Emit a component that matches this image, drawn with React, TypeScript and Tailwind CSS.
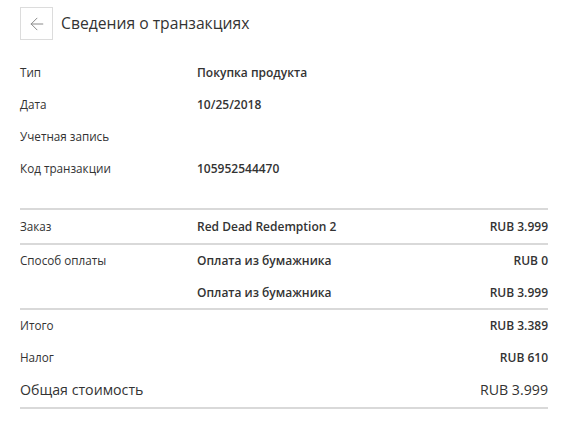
import { ArrowLeft } from "lucide-react";

const infoRows = [
  { label: "Тип", value: "Покупка продукта" },
  { label: "Дата", value: "10/25/2018" },
  { label: "Учетная запись", value: "" },
  { label: "Код транзакции", value: "105952544470" },
];

const Row = ({
  label,
  value,
  amount,
  h,
}: {
  label: string;
  value?: string;
  amount?: string;
  h: string;
}) => (
  <div className={`flex items-center text-[#333] ${h}`}>
    <span className="w-[177px] shrink-0 text-[11.7px]">{label}</span>
    <span className="flex-1 font-semibold text-[12px]">{value}</span>
    <span className="font-semibold text-[12px]">{amount}</span>
  </div>
);

const App = () => {
  return (
    <div
      className="w-[564px] h-[424px] bg-white pl-5 pr-4 pt-[7px]"
      style={{ fontFamily: '"Open Sans", "Noto Sans", sans-serif' }}
    >
      <div className="flex items-center">
        <button className="w-[33px] h-[33px] border border-[#dcdcdc] flex items-center justify-center text-[#8a8a8a]">
          <ArrowLeft size={20} strokeWidth={1.2} />
        </button>
        <h1 className="ml-2 text-[15.7px] text-[#333]">Сведения о транзакциях</h1>
      </div>

      <div className="mt-[17px]">
        {infoRows.map((r) => (
          <Row key={r.label} label={r.label} value={r.value} h="h-8" />
        ))}
      </div>

      <div className="mt-[23px] h-[2px] bg-[#d9d9d9]" />
      <Row label="Заказ" value="Red Dead Redemption 2" amount="RUB 3.999" h="h-[33px]" />
      <div className="h-[2px] bg-[#d9d9d9]" />
      <Row label="Способ оплаты" value="Оплата из бумажника" amount="RUB 0" h="h-8" />
      <Row label="" value="Оплата из бумажника" amount="RUB 3.999" h="h-[31px]" />
      <div className="h-[2px] bg-[#d9d9d9]" />
      <Row label="Итого" amount="RUB 3.389" h="h-8" />
      <Row label="Налог" amount="RUB 610" h="h-[31px]" />
      <div className="flex items-center h-[34px] text-[14.2px] text-[#333]">
        <span className="flex-1">Общая стоимость</span>
        <span className="font-medium">RUB 3.999</span>
      </div>
      <div className="h-[2px] bg-[#d9d9d9]" />
    </div>
  );
};

export default App;
